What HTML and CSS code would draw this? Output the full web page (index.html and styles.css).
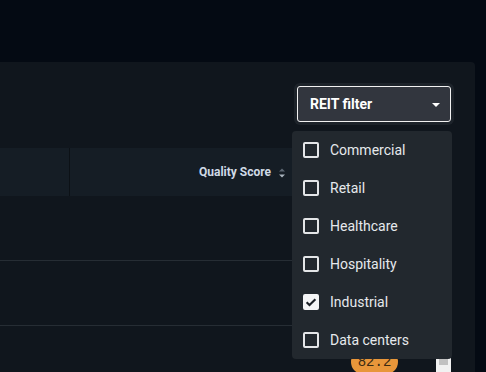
FILE: index.html
```html
<!DOCTYPE html>
<html lang="en">
<head>
    <meta charset="UTF-8">
    <title>REIT table</title>
    <link rel="stylesheet" href="styles.css">
</head>
<body>
    <div class="topbar"></div>

    <!-- 主面板 -->
    <section class="panel">
        <div class="toolbar">
            <div class="filter">
                <button class="filter-btn">
                    <span>REIT filter</span>
                    <span class="caret"></span>
                </button>

                <!-- 下拉菜单 -->
                <ul class="filter-menu">
                    <li><span class="box"></span>Commercial</li>
                    <li><span class="box"></span>Retail</li>
                    <li><span class="box"></span>Healthcare</li>
                    <li><span class="box"></span>Hospitality</li>
                    <li><span class="box checked"><svg viewBox="0 0 16 16" width="16" height="16"><path d="M3.6 8.2l2.9 2.9L12.4 5.2" fill="none" stroke="#1b2026" stroke-width="2.1"/></svg></span>Industrial</li>
                    <li><span class="box"></span>Data centers</li>
                </ul>
            </div>
        </div>

        <div class="table-wrap">
            <div class="table">
                <div class="thead">
                    <div class="th th-first"></div>
                    <div class="th th-score">
                        Quality Score
                        <svg class="sort" viewBox="0 0 8 10" width="8" height="10"><path d="M4 0.5L7 3.5H1z" fill="#5d6772"/><path d="M4 9.5L7 6.5H1z" fill="#aab4be"/></svg>
                    </div>
                    <div class="th"></div>
                </div>
                <div class="row"></div>
                <div class="row"></div>
                <div class="row">
                    <div class="cell-score"><span class="badge">82.2</span></div>
                </div>
            </div>
            <div class="scrollbar">
                <div class="thumb"></div>
            </div>
        </div>
    </section>
</body>
</html>
```

FILE: styles.css
```css
:root {
    --page: #040a13;
    --panel: #10161d;
    --head: #151d25;
    --menu: #22282e;
    --text: #e8ecf0;
}

* {
    margin: 0;
    padding: 0;
    box-sizing: border-box;
    font-family: Roboto, 'Liberation Sans', sans-serif;
}

body {
    background-color: var(--page);
    color: var(--text);
    height: 372px;
    overflow: hidden;
}

.topbar {
    height: 62px;
}

/* 面板 */
.panel {
    background: var(--panel);
    margin-right: 11px;
    border-radius: 0 4px 0 0;
    height: 310px;
}

.toolbar {
    display: flex;
    justify-content: flex-end;
    padding: 24px 24px 0 0;
    height: 86px;
}

.filter {
    position: relative;
}

.filter-btn {
    display: flex;
    align-items: center;
    justify-content: space-between;
    width: 154px;
    height: 36px;
    padding: 0 10px 0 12px;
    background: #32363e;
    color: #ffffff;
    border: 1px solid #f2f2f2;
    border-radius: 3px;
    font-size: 14px;
    font-weight: 700;
    box-shadow: 0 0 0 3px #1d232a;
}

.caret {
    width: 0;
    height: 0;
    border-left: 4px solid transparent;
    border-right: 4px solid transparent;
    border-top: 4px solid #ffffff;
    margin-top: 1px;
}

.filter-menu {
    position: absolute;
    top: 45px;
    right: -1px;
    width: 160px;
    list-style: none;
    background: var(--menu);
    border-radius: 4px;
    z-index: 10;
}

.filter-menu li {
    display: flex;
    align-items: center;
    gap: 11px;
    height: 38px;
    padding-left: 11px;
    font-size: 14px;
    color: #e6e9ec;
}

.box {
    width: 16px;
    height: 16px;
    border: 2px solid #e4e6e8;
    border-radius: 2px;
    display: flex;
}

.box.checked {
    background: #f4f5f6;
    border-color: #f4f5f6;
    padding: 0;
}

.box.checked svg {
    margin: -2px;
}

/* 表格 */
.table-wrap {
    display: flex;
    width: 451px;
}

.table {
    flex: 1;
}

.thead {
    display: flex;
    height: 48px;
    background: var(--head);
}

.th {
    display: flex;
    align-items: center;
    justify-content: flex-end;
    flex: 1;
    font-size: 12px;
    font-weight: 700;
    color: #cfdae6;
}

.th-first {
    flex: 0 0 70px;
    border-right: 1px solid #0c1116;
}

.th-score {
    flex: 0 0 222px;
    padding-right: 6px;
    gap: 7px;
}

.sort {
    margin-top: 2px;
}

.row {
    height: 65px;
    border-top: 1px solid #262d34;
}

.thead + .row {
    height: 64px;
    border-top: none;
}

.cell-score {
    padding: 24px 0 0 351px;
}

.badge {
    display: inline-block;
    width: 47px;
    height: 24px;
    line-height: 24px;
    text-align: center;
    border-radius: 12px;
    background: #e8963a;
    color: #3a2a12;
    font-family: 'Liberation Mono', monospace;
    font-size: 14px;
}

.scrollbar {
    width: 15px;
    background: #f1f1f1;
    padding: 209px 3px 0;
}

.thumb {
    height: 8px;
    background: #c1c1c1;
}
```
